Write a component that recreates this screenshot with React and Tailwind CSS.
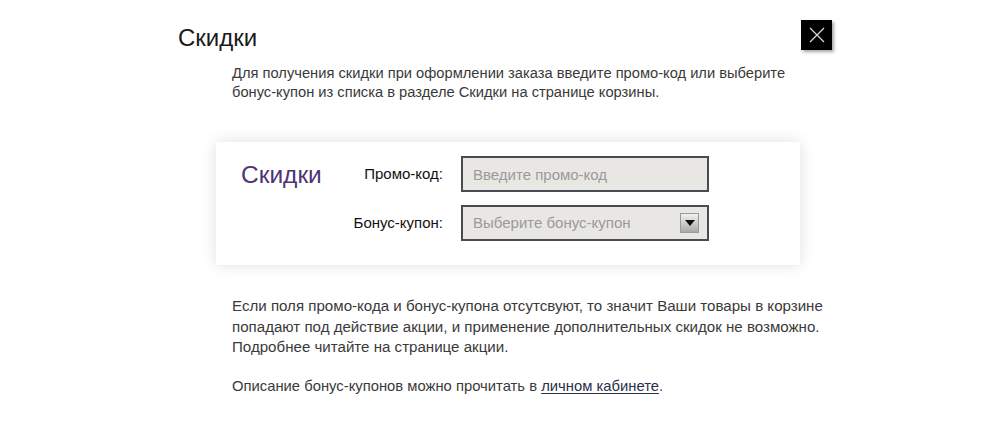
export default function App() {
  return (
    <div className="min-h-[439px] w-[1000px] bg-white font-['Liberation_Sans',Arial,sans-serif] text-[#333]">
      <div className="ml-[178px] w-[654px] pt-[20px]">
        {/* header */}
        <div className="flex items-start justify-between">
          <h1 className="mt-[4px] text-[24px] leading-[28px] text-[#1a1a1a]">Скидки</h1>
          <button className="flex h-[30px] w-[31px] items-center justify-center bg-black shadow-[2px_2px_3px_rgba(0,0,0,0.35)]">
            <svg width="16" height="16" viewBox="0 0 16 16">
              <path d="M1 1L15 15M15 1L1 15" stroke="#d8d8d8" strokeWidth="1.3" fill="none" />
            </svg>
          </button>
        </div>

        <p className="ml-[54px] mt-[12px] text-[14.7px] leading-[19px] text-[#3a3a3a]">
          Для получения скидки при оформлении заказа введите промо-код или выберите
          <br />
          бонус-купон из списка в разделе Скидки на странице корзины.
        </p>

        {/* card */}
        <div className="ml-[38px] mt-[40px] flex h-[123px] w-[584px] bg-white shadow-[0_0_14px_rgba(0,0,0,0.13)]">
          <div className="w-[127px] pl-[25px] pt-[19px] text-[24.5px] leading-[28px] text-[#4b3575]">Скидки</div>
          <div className="flex flex-col gap-[13px] pt-[14px]">
            <div className="flex items-center">
              <span className="w-[100px] text-right text-[15px] text-[#111]">Промо-код:</span>
              <input
                placeholder="Введите промо-код"
                className="ml-[18px] h-[36px] w-[248px] border-2 border-[#474c52] bg-[#e9e7e3] px-[10px] text-[15px] text-[#333] placeholder-[#9a9a9a] outline-none"
              />
            </div>
            <div className="flex items-center">
              <span className="w-[100px] text-right text-[15px] text-[#111]">Бонус-купон:</span>
              <div className="ml-[18px] flex h-[36px] w-[248px] items-center justify-between border-2 border-[#474c52] bg-[#e9e7e3] pl-[10px] pr-[8px]">
                <span className="text-[15px] text-[#9a9a9a]">Выберите бонус-купон</span>
                <span className="flex h-[20px] w-[19px] items-center justify-center border border-[#9a9a9a] bg-gradient-to-b from-[#f2f2f2] to-[#a9a9a9]">
                  <svg width="10" height="6" viewBox="0 0 10 6">
                    <path d="M0 0H10L5 6Z" fill="#111" />
                  </svg>
                </span>
              </div>
            </div>
          </div>
        </div>

        <div className="ml-[54px] mt-[31px] text-[15.1px] leading-[20.5px] text-[#3a3a3a]">
          <p>
            Если поля промо-кода и бонус-купона отсутсвуют, то значит Ваши товары в корзине
            <br />
            попадают под действие акции, и применение дополнительных скидок не возможно.
            <br />
            Подробнее читайте на странице акции.
          </p>
          <p className="mt-[18px] text-[14.8px]">
            Описание бонус-купонов можно прочитать в{" "}
            <a href="#" className="text-[#2a2f4a] underline underline-offset-2">
              личном кабинете
            </a>
            .
          </p>
        </div>
      </div>
    </div>
  )
}
